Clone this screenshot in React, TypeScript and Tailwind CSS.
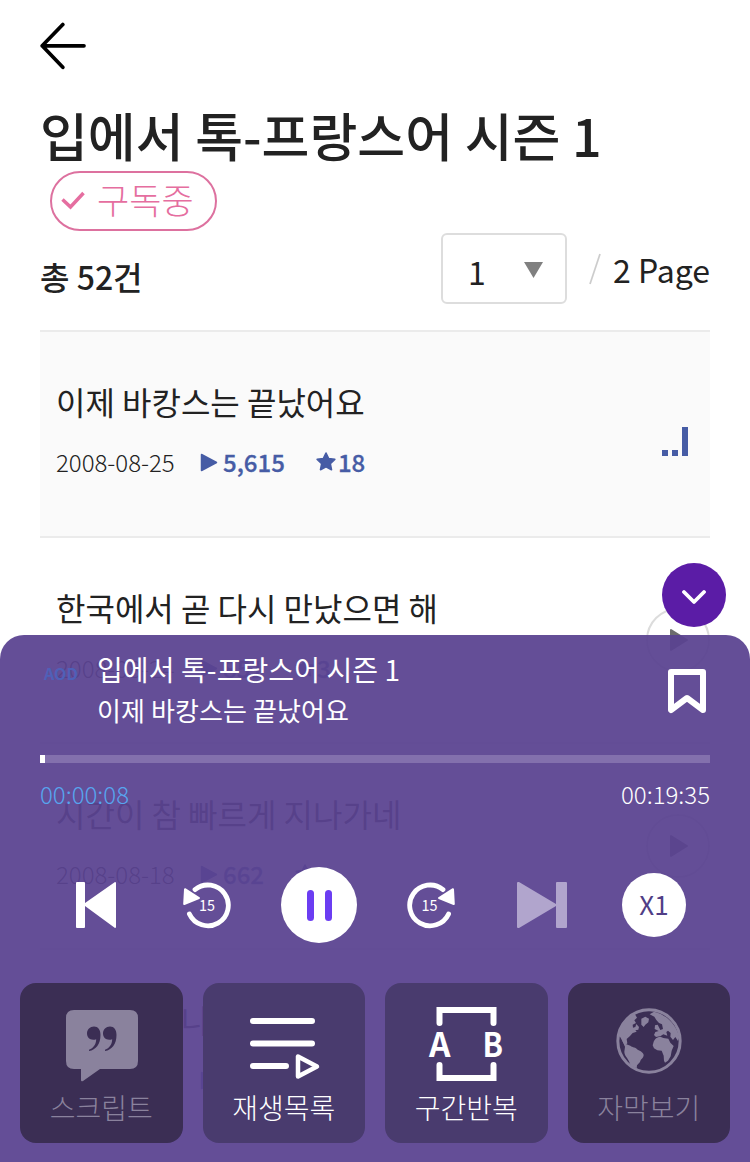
import React from 'react';

type Item = { title: string; date: string; plays: string; stars: string; playing?: boolean };

const items: Item[] = [
  { title: '이제 바캉스는 끝났어요', date: '2008-08-25', plays: '5,615', stars: '18', playing: true },
  { title: '한국에서 곧 다시 만났으면 해', date: '2008-08-24', plays: '851', stars: '3' },
  { title: '시간이 참 빠르게 지나가네', date: '2008-08-18', plays: '662', stars: '1' },
  { title: '오랜만에 나가요', date: '2008-08-14', plays: '604', stars: '1' },
];

function Row({ item }: { item: Item }) {
  return (
    <li className={`flex h-[206px] shrink-0 items-center justify-between border-t-2 border-[#ebebeb] pl-4 ${item.playing ? 'bg-[#fafafa]' : ''}`}>
      <div className="mb-[11px] flex flex-col">
        <p className="h-12 text-[32px] leading-[48px] whitespace-nowrap">{item.title}</p>
        <div className="mt-[19px] flex h-9 items-center text-[24px] leading-9 font-medium text-[#465ca5]">
          <span className="w-[144px] font-light text-[#222]">{item.date}</span>
          <svg className="mr-[5px] h-[19px] w-[18px]" viewBox="0 0 18 19">
            <path d="M1.500 1.500v16L16.500 9.500z" fill="currentColor" stroke="currentColor" strokeWidth="1.500" strokeLinejoin="round" />
          </svg>
          <span className="[-webkit-text-stroke:0.3px_#465ca5]">{item.plays}</span>
          <svg className="mr-[2px] ml-[31px] h-5 w-5" viewBox="0 0 20 20">
            <path d="M10 1l2.700 5.600 6.100.8-4.500 4.200 1.200 6.100L10 14.800l-5.500 2.900 1.200-6.100L1.200 7.400l6.100-.8z" fill="currentColor" stroke="currentColor" strokeWidth="1.600" strokeLinejoin="round" />
          </svg>
          <span className="[-webkit-text-stroke:0.3px_#465ca5]">{item.stars}</span>
        </div>
      </div>
      {item.playing ? (
        <div className="mr-[22px] mt-3.5 flex items-end gap-1">
          <i className="h-1.5 w-1.5 bg-[#465ca5]" />
          <i className="h-1.5 w-1.5 bg-[#465ca5]" />
          <i className="h-[29px] w-1.5 bg-[#465ca5]" />
        </div>
      ) : (
        <div className="flex h-16 w-16 items-center justify-center rounded-full border-2 border-[#dcdcdc]">
          <svg className="ml-[1px] h-6 w-5" viewBox="0 0 20 24">
            <path d="M2 2v20L18 12z" fill="#6d6d6d" stroke="#6d6d6d" strokeWidth="2" strokeLinejoin="round" />
          </svg>
        </div>
      )}
    </li>
  );
}

function Seek({ forward }: { forward?: boolean }) {
  return (
    <svg className="h-[50px] w-[50px]" viewBox="0 0 50 50">
      <g transform={forward ? 'matrix(-1 0 0 1 50 0)' : undefined}>
        <path d="M13 9.600A20.400 20.400 0 1 1 7.400 34" fill="none" stroke="#fff" strokeWidth="4.800" strokeLinecap="round" />
        <path d="M3 9.200L2.200 24 17 18z" fill="#fff" stroke="#fff" strokeWidth="2" strokeLinejoin="round" />
      </g>
      <text x={forward ? 23.500 : 25} y="31" textAnchor="middle" fontSize="15.500" fontWeight="400" textLength="16" lengthAdjust="spacingAndGlyphs" fill="#fff">15</text>
    </svg>
  );
}

function Globe() {
  return (
    <svg className="h-[66px] w-[66px]" viewBox="49 38 198 198" fill="currentColor">
      <circle cx="148" cy="137" r="93.500" fill="none" stroke="currentColor" strokeWidth="9" />
      <path d="M57 122C62 88 86 58 118 46L106 57l6 10-8 8 5 8-10 5 1 9 7-2 3-9 8 9-2 8-9 2 4 4-12 4-8 9-10 9 2 13-7 7-8-14-6-11z" />
      <path d="M66 132l12 14 14 5c7 6 16 4 22 12 8 4 18 8 18 17-1 10-9 11-11 20l-9 10-1 9-17-7-7-16c-4-9-13-16-13-27l2-15z" />
      <path d="M125 70l12-6 11 6-2 11-9 7-5 7-7-7z" />
      <path d="M163 49c34 7 66 36 76 76l-4 12-8-12-7 9-8-10 1-11-8-7-5 4 3 11-12-4-8 5-14 3-6-6 4-9 10-3-12-6 1-11 8-2 8 16 8-3-3-14-9-4-8-9-6-10-14-7z" />
      <path d="M161 143c2-10 9-18 21-19l9 4 15 2 6 12 10 10-6 14-3 17-8 13-9 6-3-6-1-15-6-15-13-1-10-6-4-9z" />
    </svg>
  );
}

function Tool({ label, disabled, children }: { label: string; disabled?: boolean; children: React.ReactNode }) {
  return (
    <button className={`flex h-40 flex-col items-center rounded-[16px] ${disabled ? 'bg-[#3b2e54] text-[#8a829d]' : 'bg-[#493b6e] text-white'}`}>
      <span className="flex h-[105px] items-start justify-center pt-6">{children}</span>
      <span className="text-[28px] leading-[38px] font-light whitespace-nowrap">{label}</span>
    </button>
  );
}

export default function App() {
  return (
    <div className="relative h-[1162px] w-[750px] overflow-hidden bg-white font-['Noto_Sans_CJK_KR',sans-serif] text-[#222]">
      <main className="flex h-full flex-col px-10">
        <header className="flex h-[92px] items-center">
          <svg className="h-12 w-12" viewBox="0 0 48 48" fill="none" stroke="#000" strokeWidth="3.700" strokeLinecap="round" strokeLinejoin="round">
            <path d="M44 23.800H2.200M22.800 2.500L2.200 23.800l20.600 21.500" />
          </svg>
        </header>
        <h1 className="mt-2 mb-px h-[70px] text-[52px] leading-[70px] font-medium whitespace-nowrap">입에서 톡-프랑스어 시즌 1</h1>
        <div className="ml-2.5 flex h-[60px] w-[167px] items-center rounded-full border-2 border-[#dd719f] pl-[9px] text-[#e56ea0]">
          <svg className="h-5 w-6" viewBox="0 0 24 20" fill="none" stroke="currentColor" strokeWidth="3.500">
            <path d="M1.500 8.500l8 7.500L22.500 2" />
          </svg>
          <span className="mb-[5px] ml-3 text-[35px] leading-[52px] font-light">구독중</span>
        </div>
        <div className="flex h-[99px] items-start justify-between">
          <p className="mt-5 text-[32px] leading-[50px] font-medium">총 52건</p>
          <div className="mt-0.5 flex h-[71px] items-center text-[32px]">
            <div className="flex h-[71px] w-[126px] items-center justify-between rounded-[6px] border-2 border-[#ddd] pr-[22px] pl-[25px]">
              <span className="mt-1">1</span>
              <svg className="mt-0.5 h-4 w-[19px]" viewBox="0 0 19 16"><path d="M0 0h19L9.500 16z" fill="#808080" /></svg>
            </div>
            <svg className="ml-[22px] h-8 w-3" viewBox="0 0 12 32"><path d="M1 31L11 1" stroke="#ccc" strokeWidth="1.700" /></svg>
            <span className="ml-3">2 Page</span>
          </div>
        </div>
        <ul className="flex flex-col">
          {items.map((item) => <Row key={item.title} item={item} />)}
        </ul>
      </main>

      <section className="absolute inset-x-0 bottom-0 flex h-[527px] flex-col rounded-t-[24px] bg-[#5a4391]/94 text-white">
        <div className="flex h-[120px] pt-[15px] pr-[43px] pl-10">
          <span className="mt-[13px] w-[57px] pl-1 text-[16px] leading-5 font-bold text-[#4f60b8]">AOD</span>
          <div className="flex-1">
            <p className="h-10 text-[28px] leading-[39px] tracking-[0.1px]">입에서 톡-프랑스어 시즌 1</p>
            <p className="text-[26px] leading-[39px] tracking-[0.1px]">이제 바캉스는 끝났어요</p>
          </div>
          <svg className="mt-[17px] h-12 w-[40px]" viewBox="0 0 40 48" fill="none" stroke="#fff" strokeWidth="6" strokeLinejoin="round">
            <path d="M4 5h32v38L20 31 4 43z" />
          </svg>
        </div>
        <div className="mx-10 h-2 bg-[#8370ad]"><div className="h-2 w-[5px] bg-white" /></div>
        <div className="mx-10 mt-[11px] flex h-10 justify-between text-[24px] leading-10 font-light">
          <span className="text-[#57a5ef]">00:00:08</span>
          <span>00:19:35</span>
        </div>
        <div className="mt-[53px] flex h-[76px] items-center">
          <svg className="ml-[76px] h-[46px] w-10" viewBox="0 0 40 46" fill="#fff"><path d="M1 0h7q1 0 1 1v20L39 0q1 0 1 1v44q0 1-1 1L9 24v21q0 1-1 1H1q-1 0-1-1V1q0-1 1-1z" /></svg>
          <div className="ml-[66px]"><Seek /></div>
          <div className="ml-[49px] flex h-[76px] w-[76px] items-center justify-center gap-[11px] rounded-full bg-white">
            <i className="h-[31px] w-[7px] rounded-full bg-[#6b3df2]" />
            <i className="h-[31px] w-[7px] rounded-full bg-[#6b3df2]" />
          </div>
          <div className="ml-[49px]"><Seek forward /></div>
          <svg className="ml-[61px] h-[46px] w-[50px]" viewBox="0 0 50 46" fill="#b1a5cd"><path d="M1 0q-1 0-1 1v44q0 1 1 1h1l37-22v21q0 1 1 1h9q1 0 1-1V1q0-1-1-1h-9q-1 0-1 1v21L2 0z" /></svg>
          <div className="ml-[55px] flex h-16 w-16 items-center justify-center rounded-full bg-white pb-[3px] text-[26px] text-[#503e86]">X1</div>
        </div>
        <div className="mx-5 mt-10 grid grid-cols-4 gap-5">
          <Tool label="스크립트" disabled>
            <svg className="mt-[3px] ml-px h-[72px] w-[74px]" viewBox="0 0 74 72" fill="currentColor">
              <path d="M9 0h56q8 0 8 8v43q0 8-8 8H35L18 71q-2 1-2-1V59H9q-8 0-8-8V8q0-8 8-8z" />
              <path d="M29 16.500c4 0 6.500 3 6.500 8.500C35.500 34 31 40 24 41v-1.300c4.500-1.700 7-5.200 7.200-10.500C26 31 22 28 22 23.500c0-4 3-7 7-7zM45 16.500c4 0 6.500 3 6.500 8.500C51.500 34 47 40 40 41v-1.300c4.500-1.700 7-5.200 7.200-10.500C42 31 38 28 38 23.500c0-4 3-7 7-7z" fill="#3b2e54" />
            </svg>
          </Tool>
          <Tool label="재생목록">
            <svg className="mt-[3px] ml-px h-[72px] w-[74px]" viewBox="0 0 74 72" fill="none" stroke="#fff" strokeWidth="6" strokeLinecap="round" strokeLinejoin="round">
              <path d="M6 11h59M6 33.500h59M6 56h33" /><path d="M51 46.500v20L70 56.500z" strokeWidth="4.500" />
            </svg>
          </Tool>
          <Tool label="구간반복">
            <svg className="h-[74px] w-[80px]" viewBox="0 0 80 74" fill="none" stroke="#fff" strokeWidth="6">
              <path d="M13.500 16V3h54v13M13.500 58v13h54V58" strokeLinecap="round" />
              <text x="3" y="50" fontSize="33.500" fontWeight="700" fill="#fff" stroke="none">A</text>
              <text x="56.500" y="50" fontSize="33.500" fontWeight="700" textLength="20.500" lengthAdjust="spacingAndGlyphs" fill="#fff" stroke="none">B</text>
            </svg>
          </Tool>
          <Tool label="자막보기" disabled>
            <span className="pt-px"><Globe /></span>
          </Tool>
        </div>
      </section>
      <button className="absolute top-[563px] left-[662px] flex h-16 w-16 items-center justify-center rounded-full bg-[#5b1ca6]">
        <svg className="mt-1 h-4 w-6" viewBox="0 0 24 16" fill="none" stroke="#fff" strokeWidth="3.800" strokeLinecap="round" strokeLinejoin="round"><path d="M2 3l10 10L22 3" /></svg>
      </button>
    </div>
  );
}
